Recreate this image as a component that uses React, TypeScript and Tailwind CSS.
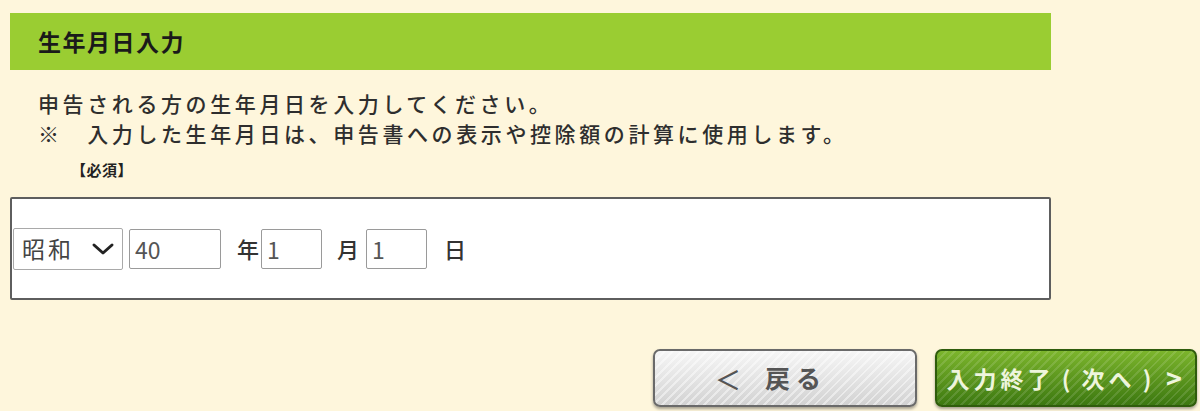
import { useState } from 'react'

const jp = "font-['Noto_Sans_CJK_JP','Noto_Sans',sans-serif]"

// evenly spaced label glyphs, like the fixed-pitch caption on the next button
const nextLabel = ['入', '力', '終', '了', '(', '次', 'へ', ')', '>']

function EraSelect() {
  return (
    <div className="flex h-[42px] w-[110px] items-center justify-between rounded-[2px] border border-[#a9a9a9] bg-white pl-[8px] pr-[7px]">
      <span className="text-[23px] leading-none tracking-[3px] text-[#444]">昭和</span>
      <svg width="24" height="16" viewBox="0 0 24 16" aria-hidden="true">
        <path d="M3 4 L12 12 L21 4" fill="none" stroke="#222" strokeWidth="3" strokeLinecap="round" strokeLinejoin="round" />
      </svg>
    </div>
  )
}

function DateField({ value, width }: { value: string; width: string }) {
  const [v, setV] = useState(value)
  return (
    <input
      value={v}
      onChange={(e) => setV(e.target.value)}
      className={`h-[40px] ${width} rounded-[2px] border border-[#9a9a9a] bg-white px-[5px] text-[23px] text-[#555] outline-none ${jp}`}
    />
  )
}

export default function App() {
  return (
    <div className={`h-[411px] w-[1200px] bg-[#fef6dc] pl-[10px] pr-[3px] pt-[13px] ${jp}`}>
      <div className="w-[1041px]">
        <div className="flex h-[57px] items-center bg-[#9acd32] pl-[28px]">
          <h2 className="text-[23px] font-bold leading-none tracking-[1.5px] text-[#1a1a1a]">生年月日入力</h2>
        </div>

        <div className="mt-[18px] pl-[28px] text-[21px] font-medium leading-[30px] tracking-[3.6px] text-[#2e2e2e]">
          <p>申告される方の生年月日を入力してください。</p>
          <p>※　入力した生年月日は、申告書への表示や控除額の計算に使用します。</p>
        </div>

        <p className="mt-[13px] pl-[61px] text-[15px] font-bold leading-[18px] tracking-[0.5px] text-[#222]">【必須】</p>

        <div className="mt-[18px] flex h-[103px] items-center rounded-[2px] border-2 border-[#5e5e5e] bg-white pl-px">
          <EraSelect />
          <div className="ml-[6px]">
            <DateField value="40" width="w-[92px]" />
          </div>
          <span className="ml-[16px] text-[22px] font-medium text-[#333]">年</span>
          <div className="ml-[2px]">
            <DateField value="1" width="w-[61px]" />
          </div>
          <span className="ml-[15px] text-[22px] font-medium text-[#333]">月</span>
          <div className="ml-[7px]">
            <DateField value="1" width="w-[61px]" />
          </div>
          <span className="ml-[17px] text-[22px] font-medium text-[#333]">日</span>
        </div>
      </div>

      <div className="mt-[49px] flex justify-end gap-[18px]">
        <button
          type="button"
          className="flex h-[58px] w-[264px] items-center justify-center gap-[24px] rounded-[7px] border-2 border-[#6a6a6a] bg-[image:repeating-linear-gradient(135deg,rgba(255,255,255,0.45)_0px,rgba(255,255,255,0.45)_2px,transparent_2px,transparent_6px),linear-gradient(to_bottom,#f6f6f6,#d2d2d2)] pr-[28px] font-bold text-[#555] shadow-[0_2px_3px_rgba(0,0,0,0.35)]"
        >
          <span className="text-[26px] font-medium">＜</span>
          <span className="text-[25px] tracking-[6px]">戻る</span>
        </button>
        <button
          type="button"
          className="flex h-[58px] w-[262px] items-center justify-center rounded-[7px] border-2 border-[#2f5c0c] bg-[image:repeating-linear-gradient(135deg,rgba(255,255,255,0.12)_0px,rgba(255,255,255,0.12)_2px,transparent_2px,transparent_6px),linear-gradient(to_bottom,#7cb52c,#3c7810)] text-[23px] font-bold text-[#eef5dc] shadow-[0_2px_3px_rgba(0,0,0,0.35)]"
        >
          {nextLabel.map((ch, i) => (
            <span key={i} className={`w-[27px] text-center ${ch === '>' ? 'text-[27px]' : ''}`}>
              {ch}
            </span>
          ))}
        </button>
      </div>
    </div>
  )
}
